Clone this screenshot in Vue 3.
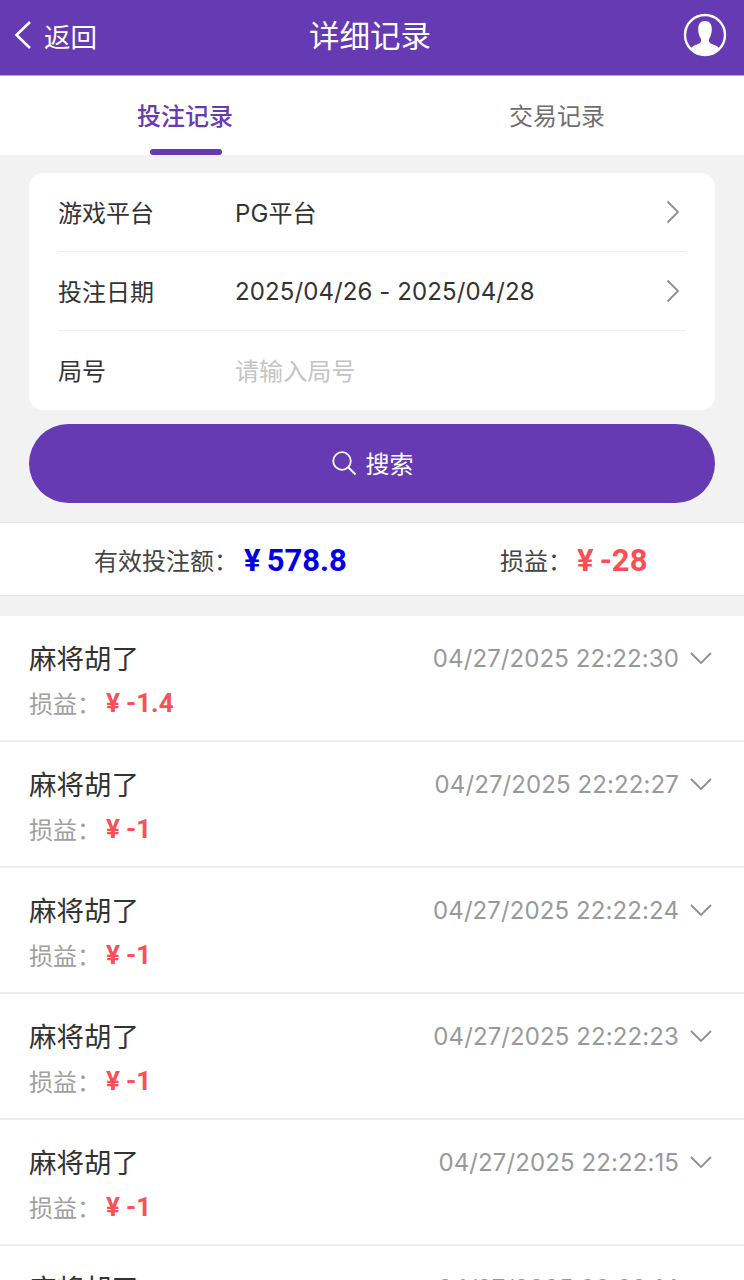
<script setup>
import { ref } from 'vue'

const records = ref([
  { name: '麻将胡了', time: '04/27/2025 22:22:30', amount: '-1.4' },
  { name: '麻将胡了', time: '04/27/2025 22:22:27', amount: '-1' },
  { name: '麻将胡了', time: '04/27/2025 22:22:24', amount: '-1' },
  { name: '麻将胡了', time: '04/27/2025 22:22:23', amount: '-1' },
  { name: '麻将胡了', time: '04/27/2025 22:22:15', amount: '-1' },
  { name: '麻将胡了', time: '04/27/2025 22:22:14', amount: '-1' },
])
</script>

<template>
  <div class="page">
    <header class="topbar">
      <div class="back">
        <svg class="back-icon" width="20" height="30" viewBox="0 0 20 30">
          <path d="M17 2 L3.500 15 L17 28" fill="none" stroke="#fff" stroke-width="2.600" />
        </svg>
        <span>返回</span>
      </div>
      <h1 class="title">详细记录</h1>
      <div class="avatar">
        <svg width="44" height="44" viewBox="0 0 44 44">
          <defs>
            <clipPath id="avatarClip"><circle cx="22" cy="22" r="19.600" /></clipPath>
          </defs>
          <circle cx="22" cy="22" r="20" fill="none" stroke="#fff" stroke-width="2.400" />
          <path clip-path="url(#avatarClip)" fill="#fff" d="M22 8c-4.600 0-6.800 3-6.800 8 0 3.800 .9 6.800 2.300 9 .6 .9 .7 2 .5 3.200-.4 1.700-1.700 2.400-4 3.200-3.200 1-5.500 2.300-6.500 4.500v8.500h29v-8.500c-1-2.200-3.300-3.500-6.500-4.500-2.300-.8-3.600-1.500-4-3.200-.2-1.200-.1-2.300 .5-3.200 1.400-2.200 2.300-5.200 2.300-9 0-5-2.200-8-6.800-8z" />
        </svg>
      </div>
    </header>

    <nav class="tabs">
      <div class="tab active"><span>投注记录</span></div>
      <div class="tab"><span>交易记录</span></div>
    </nav>

    <section class="filter">
      <div class="card">
        <div class="field">
          <span class="label">游戏平台</span>
          <span class="value">PG平台</span>
          <svg class="arrow" width="16" height="26" viewBox="0 0 16 26">
            <path d="M2.500 2.500 L13 13 L2.500 23.500" fill="none" stroke="#8f8f8f" stroke-width="1.800" />
          </svg>
        </div>
        <div class="field">
          <span class="label">投注日期</span>
          <span class="value date">2025/04/26 - 2025/04/28</span>
          <svg class="arrow" width="16" height="26" viewBox="0 0 16 26">
            <path d="M2.500 2.500 L13 13 L2.500 23.500" fill="none" stroke="#8f8f8f" stroke-width="1.800" />
          </svg>
        </div>
        <div class="field">
          <span class="label">局号</span>
          <span class="value placeholder">请输入局号</span>
        </div>
      </div>
      <button class="search">
        <svg width="26" height="26" viewBox="0 0 26 26">
          <circle cx="11" cy="11" r="8.800" fill="none" stroke="#fff" stroke-width="1.800" />
          <path d="M17.500 17.500 L24.500 24.500" fill="none" stroke="#fff" stroke-width="1.800" />
        </svg>
        <span>搜索</span>
      </button>
    </section>

    <section class="summary">
      <div class="sum-item sum-bet">
        <span class="sum-label">有效投注额：</span>
        <span class="sum-num blue"><i>¥</i>578.8</span>
      </div>
      <div class="sum-item sum-profit">
        <span class="sum-label">损益：</span>
        <span class="sum-num red"><i>¥</i>-28</span>
      </div>
    </section>

    <ul class="list">
      <li v-for="(r, i) in records" :key="i" class="row">
        <div class="row-top">
          <span class="game">{{ r.name }}</span>
          <span class="time">{{ r.time }}</span>
          <svg class="chevron" width="24" height="14" viewBox="0 0 24 14">
            <path d="M2 2 L12 12 L22 2" fill="none" stroke="#8f8f8f" stroke-width="1.800" />
          </svg>
        </div>
        <div class="row-bottom">
          <span class="row-label">损益：</span>
          <span class="row-num"><i>¥</i>{{ r.amount }}</span>
        </div>
      </li>
    </ul>
  </div>
</template>

<style scoped>
.page {
  width: 744px;
  height: 1280px;
  overflow: hidden;
  background: #f2f2f2;
  font-family: Inter, "Noto Sans CJK SC", sans-serif;
}
.topbar {
  height: 69px;
  background: #663ab3;
  border-bottom: 1px solid #b9a3dc;
  display: flex;
  align-items: center;
  justify-content: space-between;
  padding: 0 17px 6px 13px;
  color: #fff;
  position: relative;
}
.back {
  display: flex;
  align-items: center;
  gap: 11px;
  font-size: 26.500px;
}
.back span {
  margin-top: 2px;
}
.back-icon {
  margin-top: 1px;
}
.title {
  position: absolute;
  left: 0;
  right: 4px;
  margin: -2px 0 0;
  text-align: center;
  font-size: 30.500px;
  font-weight: 400;
  pointer-events: none;
}
.avatar {
  width: 44px;
  height: 44px;
}
.tabs {
  height: 79px;
  background: #fff;
  display: flex;
}
.tab {
  width: 372px;
  display: flex;
  justify-content: center;
  align-items: center;
  font-size: 24px;
  color: #6e6e6e;
  position: relative;
  padding: 0 2px 2px 0;
  box-sizing: border-box;
}
.tab.active {
  color: #663ab3;
  font-weight: 500;
}
.tab.active::after {
  content: "";
  position: absolute;
  bottom: 0;
  left: 150px;
  width: 72px;
  height: 6px;
  border-radius: 3px;
  background: #663ab3;
}
.filter {
  padding: 18px 29px 19px;
}
.card {
  background: #fff;
  border-radius: 14px;
  padding: 0 29px;
}
.field {
  height: 79px;
  box-sizing: border-box;
  display: flex;
  align-items: center;
  padding-bottom: 2px;
  border-bottom: 1px solid #efefef;
  font-size: 24px;
  color: #333;
}
.field:last-child {
  border-bottom: none;
}
.label {
  width: 177px;
}
.value {
  flex: 1;
  letter-spacing: 0.1px;
}
.date {
  margin-top: 3px;
}
.placeholder {
  color: #c4c4c4;
}
.arrow {
  margin: 2px 5px 0 0;
}
.search {
  margin-top: 14px;
  width: 100%;
  height: 79px;
  border: none;
  border-radius: 40px;
  background: #663ab3;
  color: #fff;
  font-family: inherit;
  font-size: 24px;
  display: flex;
  align-items: center;
  justify-content: center;
  gap: 9px;
  padding: 0 0 2px;
}
.summary {
  height: 72px;
  background: #fff;
  border-top: 1px solid #e4e4e4;
  border-bottom: 1px solid #e4e4e4;
  display: flex;
  align-items: center;
}
.sum-item {
  display: flex;
  align-items: center;
}
.sum-bet {
  margin-left: 94px;
  width: 406px;
}
.sum-label {
  font-size: 24px;
  color: #444;
  width: 150px;
}
.sum-profit .sum-label {
  width: 77px;
}
.sum-num {
  font-family: Roboto, sans-serif;
  font-size: 31px;
  font-weight: 700;
  margin-top: 2px;
}
.sum-num i {
  font-style: normal;
  margin-right: 6px;
}
.blue {
  color: #0000e6;
}
.red {
  color: #fa4f55;
}
.list {
  list-style: none;
  margin: 20px 0 0;
  padding: 0;
  background: #fff;
}
.row {
  height: 126px;
  box-sizing: border-box;
  padding: 23px 31px 0 29px;
  border-bottom: 2px solid #eeeeee;
}
.row-top {
  display: flex;
  align-items: center;
  height: 38px;
}
.game {
  font-size: 27.500px;
  color: #333;
  margin-right: auto;
  margin-top: -2px;
}
.time {
  font-size: 24px;
  letter-spacing: 0.1px;
  color: #999;
}
.chevron {
  margin-left: 10px;
}
.row-bottom {
  display: flex;
  align-items: center;
  margin-top: 9px;
  height: 32px;
}
.row-label {
  font-size: 24px;
  color: #a0a0a0;
  width: 77px;
}
.row-num {
  font-family: Roboto, sans-serif;
  font-size: 26px;
  font-weight: 700;
  color: #fa4f55;
  margin-top: 2px;
}
.row-num i {
  font-style: normal;
  margin-right: 6px;
}
</style>
